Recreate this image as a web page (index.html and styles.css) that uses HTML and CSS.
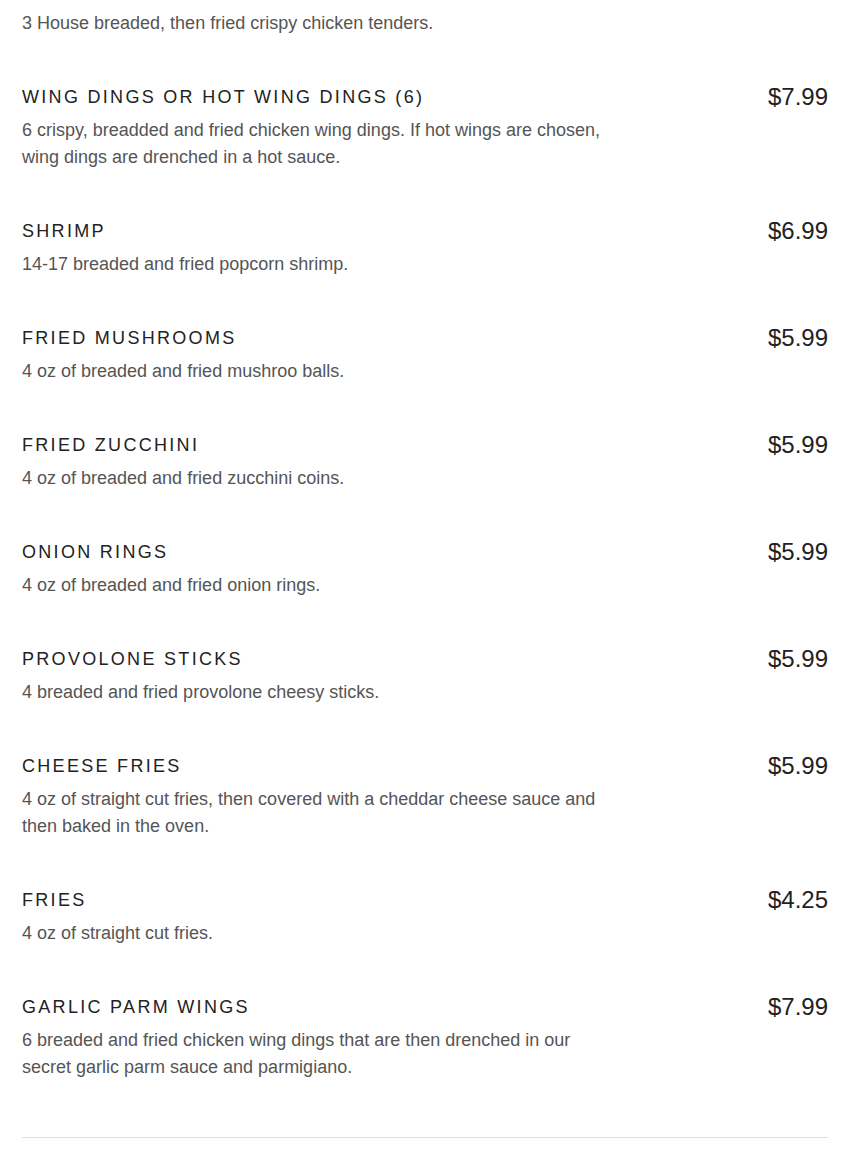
FILE: index.html
```html
<!DOCTYPE html>
<html>
<head>
<meta charset="utf-8">
<link rel="stylesheet" href="styles.css">
</head>
<body>
<div class="menu">
  <div class="item">
    <div class="head"><h3 class="name">Chicken Tenders (3)</h3><span class="price">$6.99</span></div>
    <p class="desc">3 House breaded, then fried crispy chicken tenders.</p>
  </div>
  <div class="item">
    <div class="head"><h3 class="name">Wing Dings or Hot Wing Dings (6)</h3><span class="price">$7.99</span></div>
    <p class="desc">6 crispy, breadded and fried chicken wing dings. If hot wings are chosen, wing dings are drenched in a hot sauce.</p>
  </div>
  <div class="item">
    <div class="head"><h3 class="name">Shrimp</h3><span class="price">$6.99</span></div>
    <p class="desc">14-17 breaded and fried popcorn shrimp.</p>
  </div>
  <div class="item">
    <div class="head"><h3 class="name">Fried Mushrooms</h3><span class="price">$5.99</span></div>
    <p class="desc">4 oz of breaded and fried mushroo balls.</p>
  </div>
  <div class="item">
    <div class="head"><h3 class="name">Fried Zucchini</h3><span class="price">$5.99</span></div>
    <p class="desc">4 oz of breaded and fried zucchini coins.</p>
  </div>
  <div class="item">
    <div class="head"><h3 class="name">Onion Rings</h3><span class="price">$5.99</span></div>
    <p class="desc">4 oz of breaded and fried onion rings.</p>
  </div>
  <div class="item">
    <div class="head"><h3 class="name">Provolone Sticks</h3><span class="price">$5.99</span></div>
    <p class="desc">4 breaded and fried provolone cheesy sticks.</p>
  </div>
  <div class="item">
    <div class="head"><h3 class="name">Cheese Fries</h3><span class="price">$5.99</span></div>
    <p class="desc">4 oz of straight cut fries, then covered with a cheddar cheese sauce and then baked in the oven.</p>
  </div>
  <div class="item">
    <div class="head"><h3 class="name">Fries</h3><span class="price">$4.25</span></div>
    <p class="desc">4 oz of straight cut fries.</p>
  </div>
  <div class="item">
    <div class="head"><h3 class="name">Garlic Parm Wings</h3><span class="price">$7.99</span></div>
    <p class="desc">6 breaded and fried chicken wing dings that are then drenched in our secret garlic parm sauce and parmigiano.</p>
  </div>
  <hr class="divider">
</div>
</body>
</html>
```
FILE: styles.css
```css
html, body {
  margin: 0;
  padding: 0;
  background: #fff;
}
body {
  font-family: "Liberation Sans", Arial, sans-serif;
  overflow: hidden;
}
.menu {
  padding: 0 22px;
  margin-top: -22px;
}
.item {
  padding-bottom: 48px;
}
.head {
  display: flex;
  justify-content: space-between;
  align-items: center;
  height: 24px;
  margin-bottom: 8px;
}
.name {
  margin: 0;
  font-size: 18px;
  font-weight: normal;
  text-transform: uppercase;
  letter-spacing: 2.3px;
  color: #222;
}
.price {
  font-size: 24px;
  color: #222;
}
.desc {
  margin: 0;
  font-size: 18px;
  line-height: 27px;
  color: #555;
  max-width: 595px;
}
.divider {
  margin: 8px 0 0;
  border: 0;
  border-top: 1px solid #ddd;
}
```
